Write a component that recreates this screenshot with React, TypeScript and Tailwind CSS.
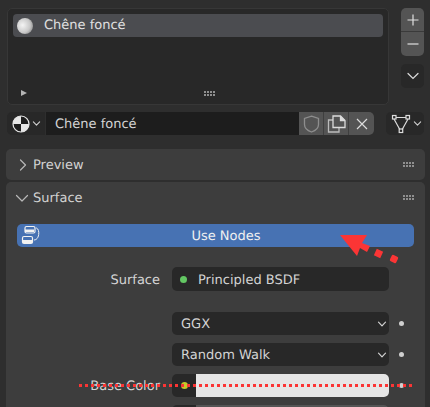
const Grip = ({ className = "" }: { className?: string }) => (
  <svg width="14" height="8" viewBox="0 0 14 8" className={className}>
    {[0, 1, 2, 3].map((i) =>
      [0, 1].map((j) => <rect key={`${i}${j}`} x={1 + i * 3} y={1 + j * 3} width="2" height="2" fill="#8f8f8f" />)
    )}
  </svg>
);

const Chevron = ({ size = 10, color = "#d0d0d0" }: { size?: number; color?: string }) => (
  <svg width={size} height={size} viewBox="0 0 10 10" fill="none" stroke={color} strokeWidth="1.2" strokeLinecap="round" strokeLinejoin="round">
    <path d="M1.5 3.2 5 6.8 8.5 3.2" />
  </svg>
);

const Dot = () => <div className="w-[5px] h-[5px] rounded-full bg-[#cfcfcf]" />;

const Select = ({ label }: { label: string }) => (
  <div className="flex items-center ml-[166px]">
    <div className="w-[217px] h-[23px] rounded-[5px] bg-[#282828] flex items-center justify-between pl-[9px] pr-[2px] text-[#d4d4d4] text-[13px] leading-none">
      <span className="pt-[2px]">{label}</span>
      <Chevron />
    </div>
    <div className="ml-[10px]"><Dot /></div>
  </div>
);

export default function App() {
  return (
    <div className="relative w-[430px] h-[407px] overflow-hidden bg-[#2e2e2e] text-[13px] [font-family:'DejaVu_Sans',sans-serif] [text-rendering:geometricPrecision]">
      <div className="pt-[8px] pl-[7px] pr-[6px] flex justify-between">
        <div className="w-[382px] h-[97px] rounded-[5px] bg-[#282828] border border-[#373737] p-[5px] flex flex-col justify-between">
          <div className="h-[23px] rounded-[4px] bg-[#4b4c50] flex items-center pl-[4px] gap-[11px] text-[#e0e0e0] leading-none">
            <div className="w-[16px] h-[16px] rounded-full bg-[radial-gradient(circle_at_35%_45%,#f4f4f4,#c8c8c8_55%,#6a6a6a)]" />
            <span>Chêne foncé</span>
          </div>
          <div className="relative flex items-center justify-center h-[10px]">
            <svg width="8" height="8" viewBox="0 0 8 8" className="absolute left-[7px] top-[0px]"><path d="M1 1 7 4 1 7Z" fill="#b5b5b5" /></svg>
            <svg width="13" height="7" viewBox="0 0 13 7" className="ml-[24px]">
              {[0, 1, 2, 3].map((i) => [0, 1].map((j) => <rect key={`${i}${j}`} x={i * 3} y={j * 3} width="2" height="2" fill="#8f8f8f" />))}
            </svg>
          </div>
        </div>
        <div className="flex flex-col w-[23px]">
          <div className="h-[24px] rounded-t-[5px] bg-[#545454] flex items-center justify-center border-b border-[#3a3a3a]">
            <svg width="12" height="12" viewBox="0 0 12 12" stroke="#e0e0e0" strokeWidth="1.2"><path d="M6 0.5V11.5M0.5 6H11.5" /></svg>
          </div>
          <div className="h-[24px] rounded-b-[5px] bg-[#545454] flex items-center justify-center">
            <svg width="12" height="12" viewBox="0 0 12 12" stroke="#e0e0e0" strokeWidth="1.2"><path d="M0.5 6H11.5" /></svg>
          </div>
          <div className="mt-[8px] h-[24px] rounded-[5px] bg-[#282828] flex items-center justify-center">
            <svg width="12" height="8" viewBox="0 0 12 8" fill="none" stroke="#dcdcdc" strokeWidth="1.2" strokeLinecap="round"><path d="M1 1.5 6 6.5 11 1.5" /></svg>
          </div>
        </div>
      </div>

      <div className="mt-[7px] pl-[7px] pr-[6px] flex justify-between h-[23px]">
        <div className="flex">
          <div className="w-[38px] rounded-l-[5px] bg-[#282828] flex items-center pl-[5px] gap-[2px]">
            <svg width="18" height="18" viewBox="0 0 18 18">
              <circle cx="9" cy="9" r="8" fill="#e6e6e6" />
              <path d="M9 1A8 8 0 0 1 17 9H9Z" fill="#1d1d1d" />
              <path d="M9 9H1A8 8 0 0 0 9 17Z" fill="#1d1d1d" />
              <circle cx="9" cy="9" r="8" fill="none" stroke="#e6e6e6" strokeWidth="1.2" />
            </svg>
            <Chevron size={9} />
          </div>
          <div className="w-[253px] ml-px bg-[#1d1d1d] flex items-center pl-[9px] pt-[2px] text-[#d4d4d4] leading-none">Chêne foncé</div>
          <div className="w-[25px] bg-[#545454] flex items-center justify-center border-r border-[#3f3f3f]">
            <svg width="17" height="18" viewBox="0 0 17 18" fill="none" stroke="#8e8e8e" strokeWidth="1.3"><path d="M8.5 1.2 15.5 3.5V9.5C15.5 13 12 15.8 8.5 17 5 15.8 1.5 13 1.5 9.5V3.5Z" /></svg>
          </div>
          <div className="w-[25px] bg-[#545454] flex items-center justify-center border-r border-[#3f3f3f]">
            <svg width="19" height="18" viewBox="0 0 19 18" fill="none" stroke="#dcdcdc" strokeWidth="1.3"><path d="M6 5H1.5V17H12V12.5" stroke="#bcbcbc" /><path d="M6 1V12.5H18V5.5L13.5 1Z" /><path d="M13.5 1V5.5H18" fill="#dcdcdc" /></svg>
          </div>
          <div className="w-[25px] rounded-r-[5px] bg-[#545454] flex items-center justify-center">
            <svg width="12" height="12" viewBox="0 0 12 12" stroke="#dcdcdc" strokeWidth="1.2"><path d="M1 1 11 11M11 1 1 11" /></svg>
          </div>
        </div>
        <div className="w-[38px] rounded-[5px] bg-[#282828] flex items-center pl-[5px] gap-[2px]">
          <svg width="20" height="20" viewBox="0 0 20 20" fill="none" stroke="#dcdcdc" strokeWidth="1.2">
            <path d="M5 3.5H15M3 5 8.8 15.5M17 5 11.2 15.5" />
            <rect x="1.5" y="1.5" width="3.5" height="3.5" />
            <rect x="15" y="1.5" width="3.5" height="3.5" />
            <rect x="8.2" y="15" width="3.5" height="3.5" />
          </svg>
          <Chevron size={9} />
        </div>
      </div>

      <div className="mt-[14px] ml-[6px] w-[419px] flex flex-col gap-[2px]">
        <div className="h-[31px] rounded-[5px] bg-[#3d3d3d] flex items-center justify-between pl-[12px] pr-[9px] text-[#d2d2d2] leading-none">
          <div className="flex items-center gap-[5px]">
            <svg width="10" height="12" viewBox="0 0 10 12" fill="none" stroke="#b8b8b8" strokeWidth="1.2" strokeLinecap="round" strokeLinejoin="round"><path d="M2.5 1 7.5 6 2.5 11" /></svg>
            <span className="pt-[2px]">Preview</span>
          </div>
          <Grip />
        </div>
        <div className="h-[240px] rounded-t-[5px] bg-[#3d3d3d]">
          <div className="h-[31px] flex items-center justify-between pl-[9px] pr-[9px] text-[#d2d2d2] leading-none">
            <div className="flex items-center gap-[4px]">
              <svg width="14" height="10" viewBox="0 0 14 10" fill="none" stroke="#b8b8b8" strokeWidth="1.2" strokeLinecap="round" strokeLinejoin="round"><path d="M1.5 2.5 7 8 12.5 2.5" /></svg>
              <span className="pt-[2px]">Surface</span>
            </div>
            <Grip />
          </div>
          <div className="mt-[11px] ml-[11px] w-[397px] h-[23px] rounded-[5px] bg-[#4772b3] flex items-center relative text-[#f0f0f0] leading-none">
            <svg width="20" height="20" viewBox="0 0 20 20" className="absolute left-[4px] top-[1px]" fill="none">
              <rect x="4" y="1.5" width="10" height="6.5" rx="1.5" stroke="#f2f2f2" strokeWidth="1.2" />
              <rect x="4" y="4.5" width="9" height="2.5" fill="#f2f2f2" />
              <rect x="1.5" y="11.5" width="10" height="7" rx="1.5" stroke="#f2f2f2" strokeWidth="1.2" />
              <rect x="2" y="15" width="9" height="3" fill="#f2f2f2" />
              <path d="M15 3C19 3 19 15 13 15" stroke="#f2f2f2" strokeWidth="1" />
            </svg>
            <span className="w-full text-center pl-[21px] pt-[2px]">Use Nodes</span>
          </div>
          <div className="mt-[20px] flex items-center h-[24px]">
            <div className="w-[154px] text-right text-[#d4d4d4] leading-none pt-[2px]">Surface</div>
            <div className="ml-[12px] w-[217px] h-[24px] rounded-[5px] bg-[#282828] flex items-center pl-[8px] gap-[11px] text-[#d4d4d4] leading-none">
              <div className="w-[7px] h-[7px] rounded-full bg-[#63c763]" />
              <span className="pt-[2px]">Principled BSDF</span>
            </div>
          </div>
          <div className="mt-[21px] flex flex-col gap-[8px]">
            <Select label="GGX" />
            <Select label="Random Walk" />
          </div>
          <div className="mt-[8px] flex items-center h-[23px]">
            <div className="w-[154px] text-right text-[#d4d4d4] leading-none pt-[2px]">Base Color</div>
            <div className="ml-[12px] w-[217px] h-[23px] rounded-[5px] bg-[#282828] flex items-center overflow-hidden">
              <div className="w-[24px] flex justify-center"><div className="w-[7px] h-[7px] rounded-full bg-[#c7c729]" /></div>
              <div className="flex-1 h-full bg-[#e6e6e6]" />
            </div>
            <div className="ml-[10px]"><Dot /></div>
          </div>
          <div className="mt-[8px] ml-[166px] w-[217px] h-[23px] rounded-[5px] bg-[#282828] flex overflow-hidden">
            <div className="ml-[24px] flex-1 bg-[#545454]" />
          </div>
        </div>
      </div>

      <svg width="430" height="407" viewBox="0 0 430 407" className="absolute inset-0 pointer-events-none">
        <path d="M340 235 367 235 362 243 370 246 367 252 360 248 357 256Z" fill="#fb3535" />
        <rect x="375" y="250" width="7" height="7" transform="rotate(25 378.5 253.5)" fill="#fb3535" />
        <rect x="390.5" y="255.5" width="7" height="7" rx="1.5" transform="rotate(25 394 259)" fill="#fb3535" />
        <path d="M79 385.5H412" stroke="#fb3535" strokeWidth="3" strokeDasharray="3 3" />
      </svg>
    </div>
  );
}
